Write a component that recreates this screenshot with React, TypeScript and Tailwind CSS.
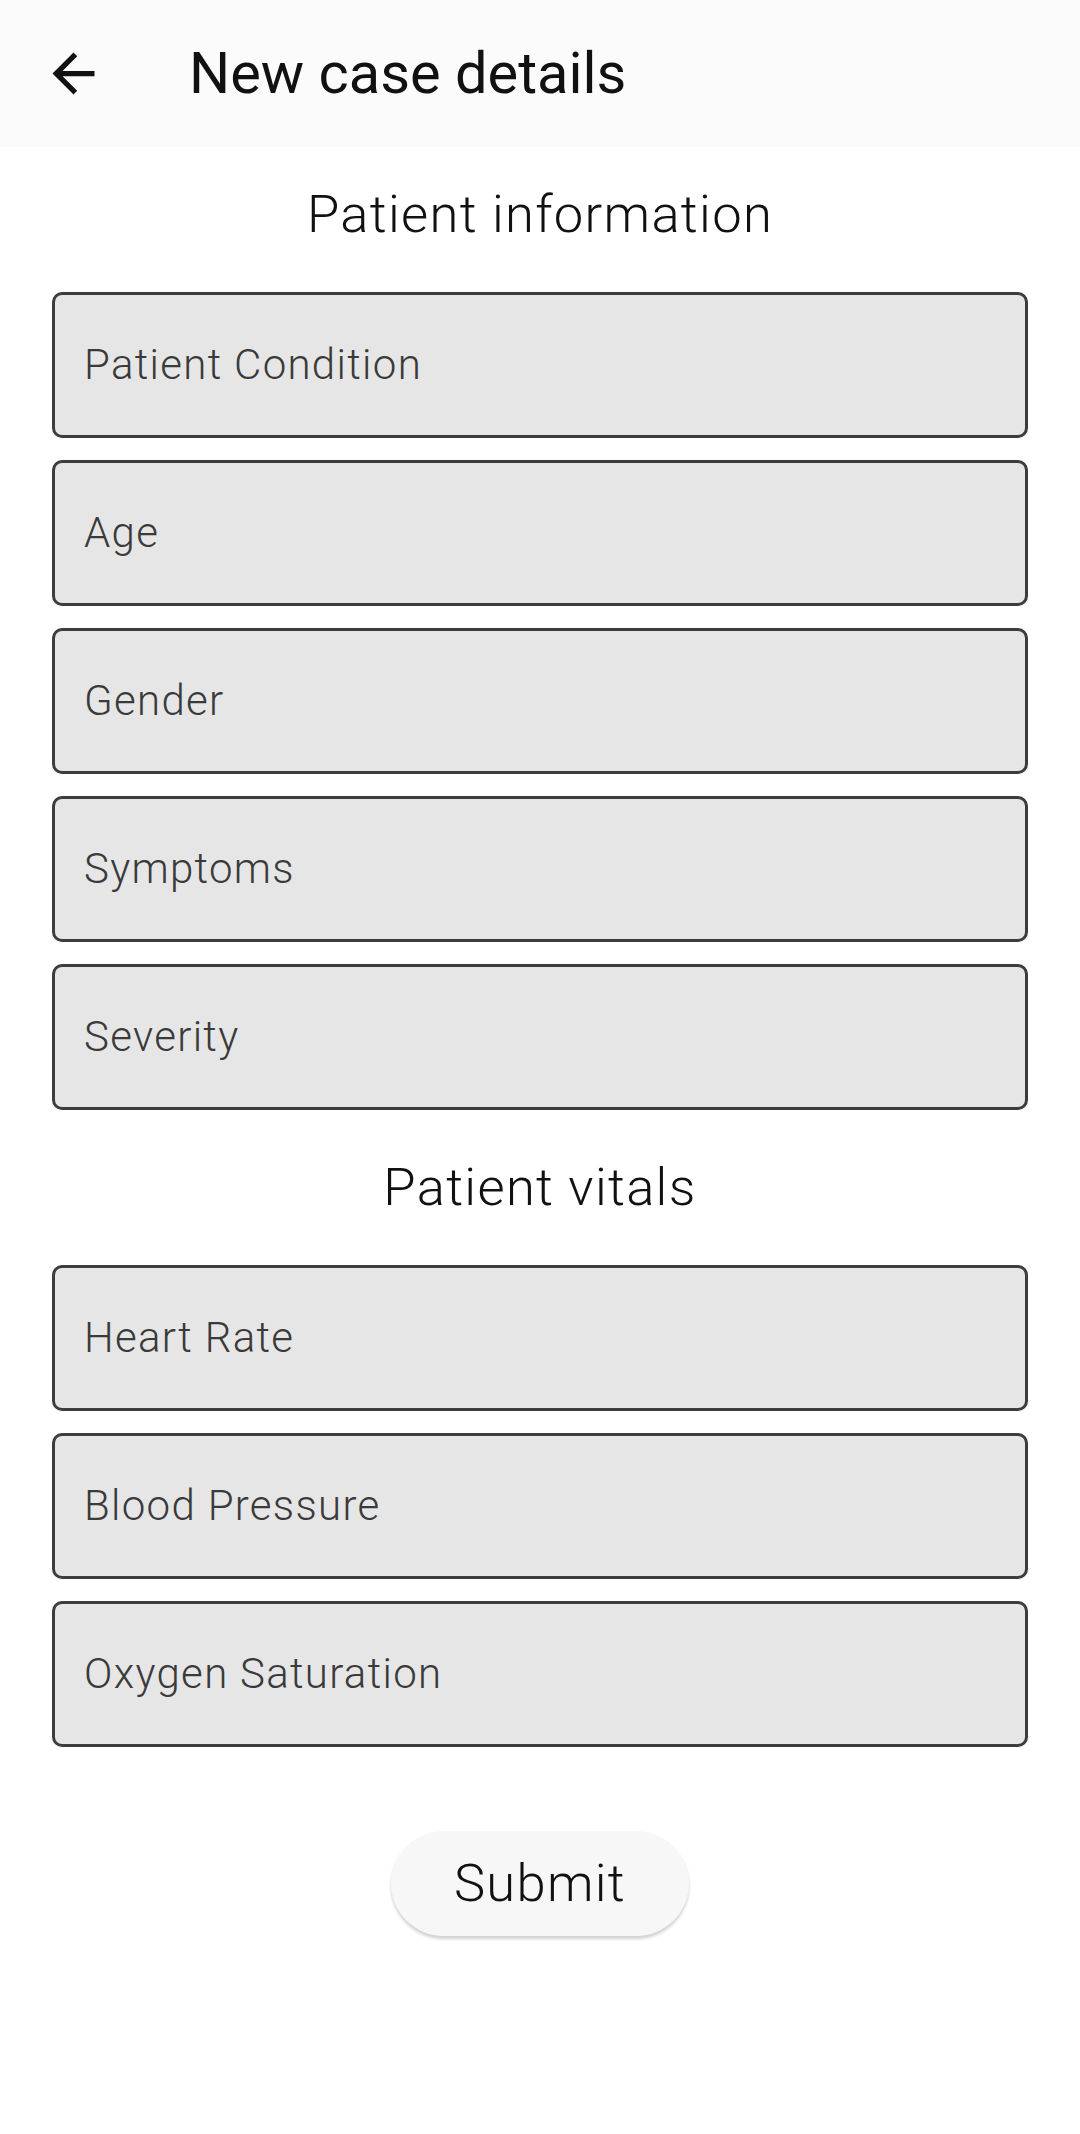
import React from "react";

const light = { fontFamily: "'Roboto Light', Roboto, 'Noto Sans', sans-serif" };

const Field = ({ label }: { label: string }) => (
  <div className="h-[146px] w-full rounded-[10px] border-[3px] border-[#3d3d3d] bg-[#e6e6e6] flex items-center pl-[29px]">
    <span style={light} className="text-[42px] font-light text-[#3a3a3a] tracking-[1.3px] leading-none">{label}</span>
  </div>
);

export default function App() {
  return (
    <div className="w-[1080px] min-h-[2134px] bg-white" style={{ fontFamily: "Roboto, 'Noto Sans', sans-serif" }}>
      <div className="h-[147px] bg-[#fbfbfb] flex items-center">
        <div className="ml-[42px] w-[63px] h-[63px]">
          <svg viewBox="0 0 24 24" width="63" height="63" fill="#111">
            <path d="M20 11H7.83l5.59-5.59L12 4l-8 8 8 8 1.41-1.41L7.83 13H20v-2z" />
          </svg>
        </div>
        <span className="ml-[84px] text-[57.75px] text-[#111] leading-none">New case details</span>
      </div>
      <div className="px-[52px] flex flex-col">
        <div style={light} className="mt-[36px] h-[62px] flex items-center justify-center text-[52.5px] font-light text-[#111] tracking-[1.3px] leading-none">Patient information</div>
        <div className="mt-[47px] flex flex-col gap-[22px]">
          <Field label="Patient Condition" />
          <Field label="Age" />
          <Field label="Gender" />
          <Field label="Symptoms" />
          <Field label="Severity" />
        </div>
        <div style={light} className="mt-[46px] h-[62px] flex items-center justify-center text-[52.5px] font-light text-[#111] tracking-[1.3px] leading-none">Patient vitals</div>
        <div className="mt-[47px] flex flex-col gap-[22px]">
          <Field label="Heart Rate" />
          <Field label="Blood Pressure" />
          <Field label="Oxygen Saturation" />
        </div>
        <div className="mt-[84px] flex justify-center">
          <button style={light} className="h-[105px] w-[298px] rounded-full bg-[#f7f7f7] shadow-[0_3px_3px_rgba(0,0,0,0.18)] flex items-center justify-center text-[52.5px] font-light text-[#111] tracking-[1.3px] leading-none">Submit</button>
        </div>
      </div>
    </div>
  );
}
